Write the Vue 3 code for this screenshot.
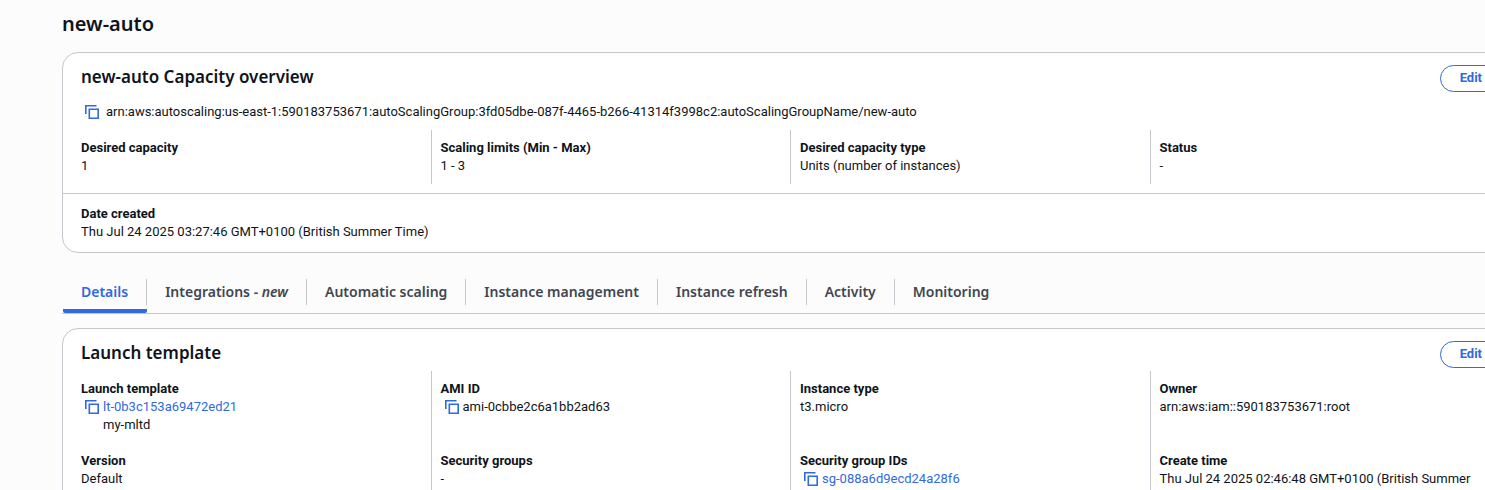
<script setup>
import { ref } from 'vue'

const tabs = [
  { label: 'Details' },
  { label: 'Integrations - ', suffix: 'new' },
  { label: 'Automatic scaling' },
  { label: 'Instance management' },
  { label: 'Instance refresh' },
  { label: 'Activity' },
  { label: 'Monitoring' }
]
const active = ref('Details')

const capacity = [
  { label: 'Desired capacity', value: '1' },
  { label: 'Scaling limits (Min - Max)', value: '1 - 3' },
  { label: 'Desired capacity type', value: 'Units (number of instances)' },
  { label: 'Status', value: '-' }
]

const template = [
  [
    { label: 'Launch template', value: 'lt-0b3c153a69472ed21', copy: true, link: true, note: 'my-mltd' },
    { label: 'Version', value: 'Default' }
  ],
  [
    { label: 'AMI ID', value: 'ami-0cbbe2c6a1bb2ad63', copy: true },
    { label: 'Security groups', value: '-' }
  ],
  [
    { label: 'Instance type', value: 't3.micro' },
    { label: 'Security group IDs', value: 'sg-088a6d9ecd24a28f6', copy: true, link: true }
  ],
  [
    { label: 'Owner', value: 'arn:aws:iam::590183753671:root' },
    { label: 'Create time', value: 'Thu Jul 24 2025 02:46:48 GMT+0100 (British Summer' }
  ]
]
</script>

<template>
  <div class="page">
    <main class="content">
      <h1>new-auto</h1>

      <section class="card">
        <header class="card-head">
          <h2>new-auto Capacity overview</h2>
          <button type="button" class="edit">Edit</button>
        </header>
        <div class="arn">
          <button type="button" class="copy" aria-label="Copy ARN">
            <svg viewBox="0 0 14 14"><path d="M0.8 9V0.8H11.5M4.3 4.3H13.2V13.2H4.3Z" /></svg>
          </button>
          <span>arn:aws:autoscaling:us-east-1:590183753671:autoScalingGroup:3fd05dbe-087f-4465-b266-41314f3998c2:autoScalingGroupName/new-auto</span>
        </div>
        <div class="columns capacity">
          <dl v-for="item in capacity" :key="item.label" class="column">
            <div class="pair">
              <dt>{{ item.label }}</dt>
              <dd>{{ item.value }}</dd>
            </div>
          </dl>
        </div>
        <dl class="card-foot">
          <dt>Date created</dt>
          <dd>Thu Jul 24 2025 03:27:46 GMT+0100 (British Summer Time)</dd>
        </dl>
      </section>

      <nav class="tabs" role="tablist">
        <button
          v-for="tab in tabs"
          :key="tab.label"
          type="button"
          role="tab"
          class="tab"
          :class="{ active: active === tab.label }"
          :aria-selected="active === tab.label"
          @click="active = tab.label"
        >
          <span class="tab-label">{{ tab.label }}<em v-if="tab.suffix">{{ tab.suffix }}</em></span>
        </button>
      </nav>

      <section class="card">
        <header class="card-head">
          <h2>Launch template</h2>
          <button type="button" class="edit">Edit</button>
        </header>
        <div class="columns template">
          <dl v-for="(column, i) in template" :key="i" class="column">
            <div v-for="item in column" :key="item.label" class="pair">
              <dt>{{ item.label }}</dt>
              <dd :class="{ copyable: item.copy }">
                <button v-if="item.copy" type="button" class="copy" :aria-label="'Copy ' + item.label">
                  <svg viewBox="0 0 14 14"><path d="M0.8 9V0.8H11.5M4.3 4.3H13.2V13.2H4.3Z" /></svg>
                </button>
                <a v-if="item.link" href="#">{{ item.value }}</a>
                <span v-else>{{ item.value }}</span>
              </dd>
              <dd v-if="item.note" class="note">{{ item.note }}</dd>
            </div>
          </dl>
        </div>
      </section>
    </main>
  </div>
</template>

<style>
body {
  margin: 0;
  background: #fcfcfd;
}
</style>

<style scoped>
.page {
  height: 100vh;
  overflow: hidden;
  font-family: Roboto, "Noto Sans", sans-serif;
  font-size: 13px;
  line-height: 18px;
  color: #0f141a;
}
.content {
  margin: 0 -36px 0 62px;
}
h1,
h2,
dl,
dd {
  margin: 0;
}
h1,
h2,
.tabs {
  font-family: "Noto Sans", "Open Sans", sans-serif;
}
h1 {
  padding: 12px 0 16px;
  font-size: 20px;
  line-height: 24px;
  font-weight: 600;
}
h2 {
  font-size: 17px;
  line-height: 24px;
  font-weight: 600;
}
button {
  font: inherit;
  background: none;
  border: 0;
  padding: 0;
  cursor: pointer;
}
.card {
  background: #fff;
  border: 1px solid #c6c6cd;
  border-radius: 16px;
}
.card-head {
  display: flex;
  justify-content: space-between;
  align-items: flex-start;
  height: 30px;
  padding: 12px 18px 0;
}
.edit {
  height: 27px;
  padding: 0 19px 2px;
  border: 1px solid #2f6ae0;
  border-radius: 14px;
  font-size: 13px;
  font-weight: 700;
  color: #2f6ae0;
}
.arn {
  display: flex;
  align-items: center;
  gap: 7px;
  margin-top: 8px;
  padding: 0 22px;
}
.copy {
  display: block;
  flex: none;
  width: 14px;
  height: 14px;
}
.copy svg {
  display: block;
  width: 14px;
  height: 14px;
  fill: none;
  stroke: #2f6ae0;
  stroke-width: 1.6;
}
.columns {
  display: grid;
  grid-template-columns: repeat(4, minmax(0, 1fr));
  gap: 7px;
  padding: 0 18px 0 8px;
}
.capacity {
  margin: 9px 0;
}
.column {
  border-left: 1px solid #c6c6cd;
  padding: 9px 0 9px 9px;
  display: grid;
  grid-auto-rows: 72px;
}
.capacity .column {
  grid-auto-rows: auto;
}
.column:first-child {
  border-left-color: transparent;
}
dt {
  font-weight: 700;
}
.copyable {
  display: flex;
  align-items: center;
  gap: 4px;
  padding-left: 4px;
}
.note {
  padding-left: 22px;
}
a {
  color: #2f6ae0;
  text-decoration: none;
}
.card-foot {
  border-top: 1px solid #c6c6cd;
  padding: 11px 18px;
}
.tabs {
  display: flex;
  margin: 20px 0 14px;
  padding: 6px 0 0 1px;
  border-bottom: 1px solid #c6c6cd;
}
.tab {
  padding-bottom: 4px;
  border-bottom: 4px solid transparent;
  border-radius: 2px;
  font-size: 14px;
  font-weight: 600;
  line-height: 26px;
  color: #424650;
}
.tab-label {
  display: block;
  padding: 0 18px;
  border-right: 1px solid #c6c6cd;
  white-space: pre;
}
.tab:last-child .tab-label {
  border-right: 0;
}
.tab.active {
  color: #2f6ae0;
  border-bottom-color: #2f6ae0;
}
</style>
